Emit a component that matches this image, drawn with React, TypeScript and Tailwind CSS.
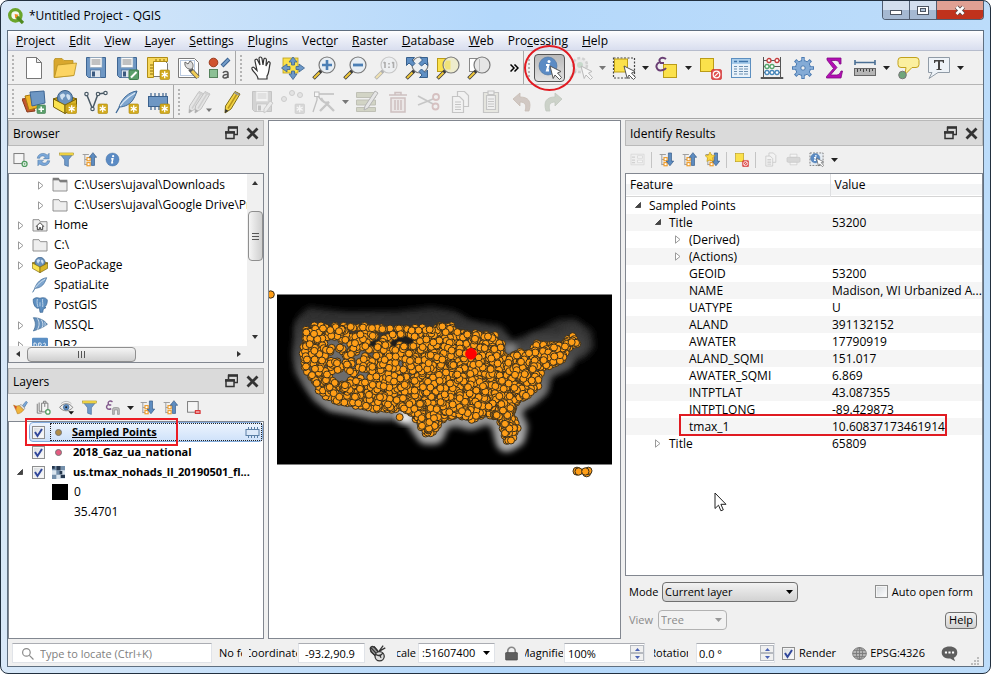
import React from "react";

type IconProps = { name: string; size?: number; className?: string };

/* ---------- small parts shared by the icons ---------- */

const StarBadge = () => (
  <g>
    <rect x="14" y="14" width="9.500" height="9.500" rx="1" fill="#d3ab1d" stroke="#a98408" strokeWidth=".6" />
    <path d="M18.700 15.200v7M15.700 17l6 3.400M21.700 17l-6 3.400" stroke="#fff" strokeWidth="1.300" />
  </g>
);

const Lens = ({ fill = "#e8eef4" }: { fill?: string }) => (
  <g>
    <path d="M1.500 22.500l8-8" stroke="#3b3b3b" strokeWidth="3.600" />
    <path d="M2 22l5.500-5.500" stroke="#f0c83a" strokeWidth="2" />
    <circle cx="15" cy="9" r="8" fill={fill} stroke="#7a7a7a" strokeWidth="1.200" />
  </g>
);

const Arrow = () => (
  <path d="M12 10l11 5.500-3.500 1.500 4 4.500-2 2-4.500-4.500-1.800 3.500z" fill="#fff" stroke="#555" strokeWidth="1" />
);

const Floppy = () => (
  <g>
    <path d="M2.500 1.500h19v20h-17l-2-2z" fill="#6e97c4" stroke="#3f6693" />
    <rect x="6" y="1.500" width="12" height="10" fill="#fafafa" stroke="#8aa0b5" strokeWidth=".6" />
    <path d="M7.500 4h9M7.500 6h9M7.500 8h9" stroke="#888" />
    <rect x="6.500" y="14" width="10" height="7.500" fill="#dfe6ee" stroke="#3f6693" strokeWidth=".6" />
    <rect x="8" y="15.500" width="3" height="5" fill="#3b5a80" />
  </g>
);

const Tree = ({ up }: { up?: boolean }) => (
  <g>
    <path d="M1 4h10M4.500 4v17M4.500 12h4M4.500 20h4" stroke="#9a9a9a" strokeWidth="1.500" fill="none" />
    <rect x="8" y="9" width="5" height="5" fill="#fff" stroke="#ef9a24" strokeWidth="1.800" />
    <rect x="8" y="17" width="5" height="5" fill="#fff" stroke="#ef9a24" strokeWidth="1.800" />
    {up ? (
      <path d="M17.500 1l6 7.500h-3.500v13h-5v-13H11.500z" fill="#5d8cc0" stroke="#2f5480" />
    ) : (
      <path d="M17.500 22l6-7.500h-3.500v-13h-5v13H11.500z" fill="#5d8cc0" stroke="#2f5480" />
    )}
  </g>
);

const Box = () => (
  <g>
    <path d="M0 9l12-4 12 4-12 6z" fill="#c49a12" stroke="#75600c" />
    <circle cx="12" cy="8" r="7.500" fill="#6a92bd" stroke="#3a5f87" />
    <path d="M7 5c2-2 4-2 5 0s-2 2-2 4-3 0-3-4zM14 4c3 0 4 3 3 5s-2 1-3-1-1-3 0-4z" fill="#cfe0f0" />
    <path d="M.5 9l11.500 6v8.500L.5 17z" fill="#fbe34e" stroke="#75600c" />
    <path d="M23.500 9L12 15v8.500L23.500 17z" fill="#d9b526" stroke="#75600c" />
  </g>
);

const Feather = () => (
  <g>
    <path d="M22 1C14 2 7 8 4 17c6 0 12-3 15-9 1-2 2-4 3-7z" fill="#7fa6cf" stroke="#3d6896" />
    <path d="M1 23C5 14 11 8 20 3" stroke="#dbe8f4" strokeWidth="1.200" fill="none" />
    <path d="M1 23l4-7" stroke="#3d6896" strokeWidth="1.300" />
  </g>
);

const Chip = () => (
  <g>
    <path d="M5 3v17M9 3v17M13 3v17M17 3v17M20 3v17" stroke="#3b618d" strokeWidth="1.200" />
    <rect x="2.500" y="6.500" width="19" height="10" fill="#6e97c4" stroke="#3b618d" />
  </g>
);

const Pencil = ({ dx = 0 }: { dx?: number }) => (
  <g transform={`translate(${dx} 0)`}>
    <path d="M16 1.500l5 2.500-9 15-6 4 .5-7z" fill="#f4d445" stroke="#7d6c1a" />
    <path d="M18.500 3L9 18.500" stroke="#b9961a" strokeWidth="1.500" />
    <path d="M15.500 2.500l4.500 2.500" stroke="#999" strokeWidth="2" />
    <path d="M6 23l.3-4 3 1.800z" fill="#333" />
  </g>
);

const Info = ({ r = 9, cx = 10, cy = 10 }: { r?: number; cx?: number; cy?: number }) => (
  <g>
    <circle cx={cx} cy={cy} r={r} fill="#5b8bc4" stroke="#47719f" strokeWidth=".6" />
    <circle cx={cx + 1} cy={cy - r * 0.5} r={r * 0.17} fill="#fff" />
    <path
      d={`M${cx - 2} ${cy - 1}h2.500l-1.500 ${r * 0.6}h2`}
      stroke="#fff"
      strokeWidth={r * 0.23}
      fill="none"
    />
  </g>
);

const NoEntry = () => (
  <g>
    <rect x="13.500" y="13.500" width="10" height="10" rx="1.500" fill="#e05050" stroke="#c22" strokeWidth=".6" />
    <circle cx="18.500" cy="18.500" r="3.300" fill="none" stroke="#fff" strokeWidth="1.200" />
    <path d="M16.300 20.700l4.400-4.400" stroke="#fff" strokeWidth="1.200" />
  </g>
);

const Plus = ({ color = "#5a9e6b" }: { color?: string }) => (
  <g>
    <rect x="15" y="15" width="8.500" height="8.500" rx="1" fill={color} stroke="#3d7d4c" strokeWidth=".6" />
    <path d="M19.200 16.500v5.500M16.500 19.200h5.500" stroke="#fff" strokeWidth="1.500" />
  </g>
);

const FolderShape = () => <path d="M1.500 4h9l2 3h10v14h-21z" fill="#eeeeee" stroke="#8a8a8a" strokeWidth="1.400" />;

const icons: Record<string, React.ReactNode> = {
  newFile: <path d="M4.500 1.500h10l5 5v16h-15zM14.500 1.500v5h5" fill="#fff" stroke="#777" />,
  open: (
    <g stroke="#b8901f" strokeWidth=".8">
      <path d="M1 4.500l1-2h7l2 2h9v15l-19 2z" fill="#d9a72d" />
      <path d="M4.500 9L23.500 7l-2.500 12.500-19.500 2z" fill="#fcd462" />
    </g>
  ),
  save: <Floppy />,
  saveAs: (
    <g>
      <Floppy />
      <rect x="14" y="14" width="9.500" height="9.500" rx="1" fill="#5a9e6b" stroke="#3d7d4c" />
      <path d="M16 21.500l5.500-5.500" stroke="#fff" strokeWidth="2" />
    </g>
  ),
  layout: (
    <g>
      <path d="M7.500 3.500h10l4 4v13h-14z" fill="#fff" stroke="#777" />
      <path d="M1.500 1.500h20v4h-14v16h-6z" fill="#f7d75a" stroke="#b08d16" />
      <path d="M4 9h3M4 12h3M4 15h3M4 18h3M10 3v2M14 3v2M18 3v2" stroke="#8a6c0b" />
      <StarBadge />
    </g>
  ),
  layoutManager: (
    <g>
      <path d="M1.500 2.500h16l4 4v15h-20z" fill="#fff" stroke="#7b7b7b" />
      <rect x="3.500" y="4.500" width="14" height="15" fill="none" stroke="#b9c9e0" />
      <path d="M13 13l8 8.500" stroke="#555" strokeWidth="4.500" />
      <path d="M15 15l6 6.500" stroke="#f0cc55" strokeWidth="3" />
      <path d="M8 6l3 2 2-3c3 1 4 5 2 8-4 1-8-2-7-7z" fill="#ddd" stroke="#666" />
    </g>
  ),
  style: (
    <g>
      <circle cx="5.500" cy="6.500" r="4.300" fill="#d0532f" stroke="#9b3a1c" />
      <path d="M14 10l7-7" stroke="#3a6292" strokeWidth="4" />
      <path d="M14.500 9.500l6-6" stroke="#759fcb" strokeWidth="2" />
      <rect x="1.500" y="13.500" width="8" height="8" fill="#8cc095" stroke="#55825c" />
      <path d="M15 17c1-2 5-2 5 .5V22M20 18.500c-6-.5-6 4-3 3.500 2 0 3-1.500 3-3" stroke="#555" strokeWidth="1.500" fill="none" />
    </g>
  ),
  hand: (
    <path
      d="M8 23c0-4-5-7-6-10-.5-2 1.500-2.500 3-.5l2 2L5 5c-.3-2 2-2.500 2.800-.5L10 9 9 2.500C9 .5 11.500.5 12 2.500L13 9l.8-5.500c.4-2 2.700-1.500 2.600.5L16 10l1.800-3.500c1-1.500 2.800-.5 2.200 1.500-1 4-1 10-3 12v3z"
      fill="#fff"
      stroke="#333"
      strokeWidth="1.200"
    />
  ),
  panTo: (
    <g stroke="#3c658f" strokeWidth=".8">
      <rect x="2" y="2" width="15" height="15" fill="#fbe14b" stroke="#bb9c17" />
      <path d="M12 1l4 5h-2.500v3H10.500V6H8zM23.500 12L18 16v-2.500h-3v-3h3V8zM12 23.500L8 18h2.500v-3h3v3H16zM.5 12L6 8v2.500h3v3H6V16z" fill="#6c98c8" />
    </g>
  ),
  zoomIn: (
    <g>
      <Lens />
      <path d="M15 4v10M10 9h10" stroke="#4c7fb5" strokeWidth="2.600" />
    </g>
  ),
  zoomOut: (
    <g>
      <Lens />
      <path d="M10 9h10" stroke="#4c7fb5" strokeWidth="2.800" />
    </g>
  ),
  zoomNative: (
    <g opacity=".35">
      <Lens />
      <path d="M11 6v6M9.500 7l1.500-.7M19.500 6v6M18 7l1.500-.7M15 7v1.500M15 10.500V12" stroke="#333" strokeWidth="1.600" />
    </g>
  ),
  zoomFull: (
    <g>
      <Lens fill="#eceff2" />
      <path d="M1.500 1.500h8L7 4l3 3.500-2.500 2.500L4 7 1.500 9.500zM22.500 1.500v8L20 7l-3.500 3L14 7.500 17.500 4 15 1.500zM22.500 21.500h-8L17 19l-3-3.500 2.500-2.500 3.500 3.500 2.500-2.500z" fill="#5f8fc4" stroke="#38608c" />
    </g>
  ),
  zoomSelection: (
    <g>
      <rect x="1.500" y="2.500" width="11" height="13" fill="#fbe14b" stroke="#bb9c17" />
      <Lens fill="#eeeccd" />
      <path d="M10 4.500h4.500v9H10l-2-4.500z" fill="#f0e27a" />
    </g>
  ),
  zoomLayer: (
    <g>
      <rect x="2.500" y="2.500" width="10" height="13" fill="#fff" stroke="#888" />
      <Lens fill="#e6e6e6" />
      <path d="M12.500 3v12" stroke="#bbb" />
    </g>
  ),
  identify: (
    <g>
      <Info />
      <Arrow />
    </g>
  ),
  action: (
    <g opacity=".35">
      <circle cx="11" cy="9" r="7" fill="#ddd" stroke="#999" strokeWidth="2.500" strokeDasharray="3 2" />
      <circle cx="11" cy="9" r="3" fill="#7db08a" />
      <Arrow />
      <path d="M1 22l6-7" stroke="#777" strokeWidth="2" />
    </g>
  ),
  select: (
    <g>
      <rect x="1.500" y="2" width="21" height="20" fill="none" stroke="#444" strokeWidth="1.200" strokeDasharray="2 1.500" />
      <rect x="2.500" y="3" width="13" height="13" fill="#fbe14b" stroke="#bb9c17" />
      <Arrow />
    </g>
  ),
  expression: (
    <g>
      <rect x="8.500" y="8.500" width="13" height="13" fill="#fbe14b" stroke="#bb9c17" />
      <path d="M11 3C7 0 3 3 5 6c-6 2-4 10 3 8 2-.5 3-2 3-2M5 7h4" stroke="#6a3f74" strokeWidth="2" fill="none" />
    </g>
  ),
  deselect: (
    <g>
      <rect x="2.500" y="2.500" width="13" height="13" fill="#fbe14b" stroke="#bb9c17" />
      <NoEntry />
    </g>
  ),
  table: (
    <g>
      <rect x="2.500" y="2.500" width="19" height="19" fill="#e9f2fa" stroke="#5c8fc0" />
      <rect x="3" y="3" width="18" height="5" fill="#a9cdeb" />
      <path d="M5 5.500h3M10 5.500h9" stroke="#3f75aa" strokeWidth="1.500" />
      <path d="M5 10.500h3M5 13h3M5 15.500h3M5 18h3M10 10.500h4M15 10.500h4M10 13h4M15 13h4M10 15.500h4M15 15.500h4M10 18h4M15 18h4" stroke="#6b8fb0" />
    </g>
  ),
  abacus: (
    <g fill="#fff">
      <path d="M3.500 1v20M20.500 1v20M3 4.500h18M3 10.500h18M3 16.500h18M1 21.500h22v1H1z" stroke="#555" />
      <g stroke="#c43c3c" strokeWidth="1.300"><circle cx="9" cy="4.500" r="2" /><circle cx="17" cy="4.500" r="2" /></g>
      <g stroke="#56a56c" strokeWidth="1.300"><circle cx="7" cy="10.500" r="2" /><circle cx="12" cy="10.500" r="2" /></g>
      <g stroke="#4586bb" strokeWidth="1.300"><circle cx="7" cy="16.500" r="2" /><circle cx="12" cy="16.500" r="2" /><circle cx="17" cy="16.500" r="2" /></g>
    </g>
  ),
  gear: (
    <g>
      <path d="M12 1v22M1 12h22M4.200 4.200l15.600 15.600M19.800 4.200L4.200 19.800" stroke="#4b7bb2" strokeWidth="3.400" />
      <circle cx="12" cy="12" r="7.500" fill="#84abd6" stroke="#4b7bb2" />
      <path d="M12 2v20M2 12h20M5 5l14 14M19 5L5 19" stroke="#84abd6" strokeWidth="2" />
      <circle cx="12" cy="12" r="2.200" fill="#f0f0f0" stroke="#4b7bb2" />
    </g>
  ),
  sigma: <path d="M5 2h14v6h-1.500c-.5-2.500-1.500-3.500-4-3.500H9l6 7-6.500 7.500h6c2.500 0 3.500-1.500 4.500-4h1.500L19 22H4.500v-1.500l7-8L5 4z" fill="#b40db4" stroke="#7d0c80" strokeWidth=".8" />,
  ruler: (
    <g>
      <path d="M2 6.500h20M2 4v5M22 4v5" stroke="#4a6f94" strokeWidth="1.600" />
      <rect x="1.500" y="12.500" width="21" height="7" fill="#b5b5b5" stroke="#666" />
      <path d="M4.500 13v3M7.500 13v2M10.500 13v3M13.500 13v2M16.500 13v3M19.500 13v2" stroke="#444" />
    </g>
  ),
  tip: (
    <g>
      <path d="M5 1.500h15q3 0 3 3v4q0 3-3 3h-4l-7 7 1-7H5q-3 0-3-3v-4q0-3 3-3z" fill="#fbef9f" stroke="#c2a21c" />
      <circle cx="6.500" cy="19" r="3.800" fill="#6fa57b" stroke="#777" />
    </g>
  ),
  text: (
    <g>
      <path d="M1.500 1.500h21v15H11l-9 6 3-6H1.500z" fill="#eef3f8" stroke="#909ba6" />
      <path d="M7 4h10v3h-1l-.5-1.500H13V13h1.500v1h-5v-1H11V5.500H8.500L8 7H7z" fill="#444" />
    </g>
  ),
  dataSource: (
    <g>
      <path d="M0 9l7-1 6 13-8 1z" fill="#c4572e" stroke="#873919" />
      <path d="M3 6l10-2 5 13-11 3z" fill="#f0b429" stroke="#a5780f" />
      <path d="M8 2l14-1 1 12-13 3z" fill="#6e97c4" stroke="#3f6693" />
      <Plus />
    </g>
  ),
  geopackage: (
    <g>
      <Box />
      <StarBadge />
    </g>
  ),
  shapefile: (
    <g>
      <path d="M2.500 4l6 15 5.500-15 7-1" stroke="#4a5a66" strokeWidth="1.500" fill="none" />
      <g fill="#fff" stroke="#4a5a66" strokeWidth="1.200"><circle cx="2.500" cy="4" r="1.700" /><circle cx="14" cy="4" r="1.700" /><circle cx="21.500" cy="3" r="1.700" /><circle cx="8.500" cy="19" r="1.700" /></g>
      <StarBadge />
    </g>
  ),
  spatialite: (
    <g>
      <Feather />
      <StarBadge />
    </g>
  ),
  memory: (
    <g>
      <Chip />
      <StarBadge />
    </g>
  ),
  pencils: (
    <g>
      <g className="opacity-35 grayscale">
        <Pencil dx={-5} />
        <Pencil dx={1} />
      </g>
      <path d="M18 18.500h6l-3 3.500z" fill="#777" />
    </g>
  ),
  pencil: <Pencil />,
  saveEdits: (
    <g className="opacity-30 grayscale">
      <Floppy />
      <path d="M20 11l3 2-6 8-3 2v-4z" fill="#ddd" stroke="#777" />
    </g>
  ),
  addPoint: (
    <g className="opacity-35 grayscale">
      <g fill="#ccc" stroke="#888"><circle cx="3" cy="9" r="2.500" /><circle cx="11" cy="3" r="2.500" /><circle cx="19" cy="5" r="2.500" /></g>
      <StarBadge />
    </g>
  ),
  vertex: (
    <g className="opacity-40">
      <path d="M5 4h17M5 5v5l-4 12M6 6l4 5" stroke="#777" strokeWidth="1.300" fill="none" />
      <rect x="2.500" y="2" width="4.500" height="4.500" fill="#fff" stroke="#777" />
      <path d="M9 8c2 4 4 6 8 4l-9 9M14 13l8 8" stroke="#888" strokeWidth="2.400" fill="none" />
    </g>
  ),
  multiEdit: (
    <g className="opacity-50">
      <path d="M1.500 2.500h19v5h-19zM1.500 10h19v5h-19zM1.500 17.500h19v4h-19z" fill="#b6ba9c" stroke="#8f927d" />
      <path d="M20 1l3 2-10 15-4 2 1-4z" fill="#ddd" stroke="#777" />
    </g>
  ),
  trash: (
    <g className="opacity-40" stroke="#9a7a7a" fill="none" strokeWidth="1.500">
      <path d="M3 5h18M9 5V2.500h6V5M5 8v14h14V8z" fill="#e5dada" />
      <path d="M9 10v10M12 10v10M15 10v10" />
    </g>
  ),
  cut: (
    <g className="opacity-40" fill="none" strokeWidth="1.800">
      <path d="M1 6l15 8M1 15l15-6" stroke="#8a8a8a" />
      <circle cx="19" cy="7" r="3" stroke="#b07d7d" />
      <circle cx="18.500" cy="16.500" r="3" stroke="#b07d7d" />
    </g>
  ),
  copy: (
    <g className="opacity-35" fill="#f6f6f6" stroke="#777" strokeWidth="1.200">
      <path d="M9.500 1.500h7l4 4v11h-11z" />
      <path d="M4.500 6.500h7l4 4v12h-11z" />
      <path d="M7 12h6M7 14.500h6M7 17h6M7 19.500h6" />
    </g>
  ),
  paste: (
    <g className="opacity-35" fill="#eee" stroke="#777" strokeWidth="1.200">
      <path d="M4.500 2.500h15v20h-15z" fill="#d8d8c6" />
      <path d="M7.500 5.500h9v14h-9zM9 1h6v3.500H9z" />
      <path d="M9 9h6M9 11.500h6M9 14h6M9 16.500h6" />
    </g>
  ),
  undo: <path d="M3 9l7-6v4c8 0 12 4 9 14h-4c2-6 0-9-5-9v4z" fill="#b3a298" stroke="#a08979" strokeWidth=".8" opacity=".5" />,
  redo: <path d="M21 9l-7-6v4c-8 0-12 4-9 14h4c-2-6 0-9 5-9v4z" fill="#a9b5a4" stroke="#92a08d" strokeWidth=".8" opacity=".5" />,

  addLayer: (
    <g>
      <rect x="1.500" y="2.500" width="16" height="16" fill="#f5f5f5" stroke="#777" strokeWidth="1.500" />
      <circle cx="18.500" cy="19" r="4" fill="#fff" stroke="#4d9a5d" strokeWidth="2" />
      <path d="M18.500 17v4M16.500 19h4" stroke="#4d9a5d" />
    </g>
  ),
  refresh: (
    <g fill="#7aa7d9" stroke="#44719f" strokeWidth=".8">
      <path d="M2 10C3 2 13 0 18 5l3-3v9h-9l3-3c-4-3-8-2-9 2z" />
      <path d="M22 14c-1 8-11 10-16 5l-3 3v-9h9l-3 3c4 3 8 2 9-2z" />
    </g>
  ),
  filter: (
    <g>
      <path d="M1 2.500h22l-8 10V23l-6-2v-8.500z" fill="#6e9ac9" stroke="#41699a" />
      <rect x="1" y="1.500" width="22" height="3.500" fill="#f5da48" stroke="#b39620" strokeWidth=".8" />
    </g>
  ),
  collapse: <Tree up />,
  expand: <Tree />,
  info: <Info r={10.500} cx={12} cy={12} />,
  brush: (
    <g>
      <path d="M15 9l6-7 2 2-5 8z" fill="#7aa7d9" stroke="#44719f" />
      <path d="M10 9l3-2 6 6-2 3z" fill="#e0e0e0" stroke="#888" />
      <path d="M1 8c4 3 6 1 9 1l7 7c-3 4-7 6-10 6-1-4-4-9-6-14z" fill="#f0b43c" stroke="#b9801d" />
      <path d="M1 8c2 2 4 2 5 2l-1 6z" fill="#cf4e31" />
    </g>
  ),
  group: (
    <g fill="none" stroke="#777" strokeWidth="1.500">
      <path d="M2 6v15h7M5 4v14h5" />
      <path d="M9 5h10v14H9zM12 5V2h4v3M14 5v6" fill="#f4f4f4" />
      <circle cx="19" cy="19" r="3.500" fill="#fff" stroke="#4d9a5d" strokeWidth="2" />
    </g>
  ),
  eye: (
    <g>
      <path d="M1 12C6 4 17 4 22 12c-6 7-15 7-21 0z" fill="#eee" stroke="#777" strokeWidth="1.400" />
      <circle cx="11.500" cy="11.500" r="4.500" fill="#5d8cc0" stroke="#3f6693" />
      <circle cx="11.500" cy="11.500" r="1.600" fill="#222" />
      <path d="M3 6C8 1 15 1 20 6" stroke="#999" fill="none" />
      <path d="M15 18h9l-4.500 5z" fill="#111" />
    </g>
  ),
  epsilonFilter: (
    <g>
      <path d="M12 3C8 0 3 3 6 7c-6 2-4 10 4 7M6 8h4" stroke="#80578b" strokeWidth="2.200" fill="none" />
      <path d="M12 23v-8q0-3 3-3h5q3 0 3 3v8h-3v-7h-5v7z" fill="#bbb" stroke="#888" />
    </g>
  ),
  removeLayer: (
    <g>
      <rect x="2.500" y="2.500" width="17" height="17" fill="#f5f5f5" stroke="#777" strokeWidth="1.500" />
      <rect x="14" y="16" width="9.500" height="6.500" rx="1" fill="#d9383a" />
      <path d="M16 19.200h5.500" stroke="#fff" strokeWidth="1.500" />
    </g>
  ),
  form: (
    <g className="opacity-35" fill="#eee" stroke="#999">
      <path d="M1.500 3.500h21v17h-21z" />
      <path d="M3 8h5M3 13h5M3 17h5" strokeWidth="2" />
      <path d="M12 6h8v4h-8zM12 13h8v4h-8z" fill="#fff" />
    </g>
  ),
  expandNew: (
    <g>
      <Tree />
      <path d="M8 0l2.500 5 5.500.5-4 4 1 5.500-5-2.500L3 15l1-5.500-4-4L5.500 5z" fill="#fcd83f" stroke="#c19a17" />
    </g>
  ),
  print: (
    <g className="opacity-35" stroke="#777">
      <path d="M6.500 3.500h11v5h-11zM6.500 15.500h11v5h-11z" fill="#fff" />
      <rect x="1.500" y="8.500" width="21" height="8" rx="2" fill="#aaa" />
    </g>
  ),
  identifyBox: (
    <g>
      <rect x="1.500" y="1.500" width="21" height="20" fill="#e8eef4" stroke="#777" strokeWidth="1.400" strokeDasharray="3 2" />
      <Info r={7.500} />
      <Arrow />
    </g>
  ),

  folder: <FolderShape />,
  folderLink: (
    <g>
      <FolderShape />
      <path d="M1 1h9l2 3h11v4H12L10 5H1z" fill="#7d7d7d" />
    </g>
  ),
  home: (
    <g>
      <FolderShape />
      <path d="M6.500 14l5.500-5.500 5.500 5.500h-1.500v5h-3v-3h-2v3H8v-5z" fill="#fff" stroke="#333" strokeWidth="1.400" />
    </g>
  ),
  box: <Box />,
  feather: <Feather />,
  postgis: (
    <g>
      <path d="M2 3C6 0 9 1 12 2c4-2 10-1 11 3 0 5-2 9-4 10l2 1-4 2-1 5h-4l-1-7-2 1c-5 0-8-9-7-14z" fill="#5e8fc0" stroke="#315e8c" />
      <path d="M8 3c-1 5 0 9 1 12M16 3c-1 4 1 6 0 12M12 8v6" stroke="#d3e2f0" strokeWidth="1.200" fill="none" />
    </g>
  ),
  mssql: (
    <g>
      <path d="M2 1c9 0 17 4 21 10-5 4-12 7-21 10 4-7 4-13 0-20z" fill="#6691bd" stroke="#3c668f" />
      <path d="M8 2c4 6 3 12 0 17M14 4c3 5 3 8 1 12M19 8c1 2 1 4 0 6" stroke="#cfdeed" strokeWidth="1.500" fill="none" />
    </g>
  ),
  db2: (
    <g>
      <rect x="0" y="1" width="24" height="22" rx="2" fill="#5b8fc4" />
      <path d="M3 9v8h1.500c3.500 0 3.500-8 0-8zM10 9v8h2.500c3 0 2-4 0-4 2 0 2-4 0-4zM17 10c2-2 4 0 3 2l-3 5h4" stroke="#fff" strokeWidth="1.300" fill="none" />
    </g>
  ),
  raster: (
    <g>
      <rect width="24" height="24" fill="#dce6ef" />
      <path d="M0 0h8v8H0zM16 0h8v8h-8zM8 8h8v8H8zM0 16h8v8H0z" fill="#7590ab" />
      <path d="M8 0h8v8H8zM0 0h5v5H0zM14 9h5v6h-5zM16 16h8v6h-8z" fill="#26384f" />
    </g>
  ),
  qgis: (
    <g>
      <circle cx="11" cy="11" r="8.500" fill="#f3f8ee" stroke="#6aa52a" strokeWidth="5" />
      <path d="M13 13l9.500 9.500" stroke="#4f8a1f" strokeWidth="5" />
      <path d="M10 9l6 1-5 6z" fill="#f08c20" />
    </g>
  ),
  search: <path d="M10 3a7 7 0 1 1 0 14 7 7 0 0 1 0-14zM15 15l8 8" stroke="#8a8a8a" strokeWidth="2.200" fill="none" />,
  mouse: (
    <g stroke="#333" fill="none" strokeWidth="1.800">
      <ellipse cx="8" cy="9" rx="4" ry="8" fill="#999" transform="rotate(-40 8 9)" />
      <path d="M3 4l9 10M2 9l7 6M7 2l6 8M20 1l-6 8 9-5" />
      <ellipse cx="15" cy="16" rx="6.500" ry="6.500" fill="#ddd" />
      <path d="M9 13c4 3 8 2 11-2M15 14l2 4" />
    </g>
  ),
  lock: (
    <g>
      <path d="M6 11V8a6 6 0 0 1 12 0v3" stroke="#888" strokeWidth="2.600" fill="none" />
      <rect x="2.500" y="10.500" width="19" height="12" rx="1" fill="#5e5e5e" stroke="#444" />
    </g>
  ),
  globe: (
    <g fill="none" stroke="#777" strokeWidth="1.400">
      <ellipse cx="12" cy="12" rx="11" ry="9.500" fill="#b5b5b5" />
      <ellipse cx="12" cy="12" rx="5" ry="9.500" />
      <path d="M1 12h22M3 7h18M3 17h18M12 2v20" />
    </g>
  ),
  message: (
    <g>
      <path d="M12 2c7 0 11 3.500 11 8.500 0 4-2 6-5 7.500l2 5-7-4C5 19 1 16 1 10.500S5 2 12 2z" fill="#5e5e5e" />
      <path d="M5.500 9h3v3h-3zM10.500 9h3v3h-3zM15.500 9h3v3h-3z" fill="#fff" />
    </g>
  ),
};

const Icon = ({ name, size = 24, className = "" }: IconProps) => (
  <svg width={size} height={size} viewBox="0 0 24 24" className={`shrink-0 ${className}`} aria-hidden="true">
    {icons[name]}
  </svg>
);

const Caret = ({ className = "text-[#222]" }: { className?: string }) => (
  <svg width="7" height="4" viewBox="0 0 7 4" className={`shrink-0 ${className}`} aria-hidden="true">
    <path d="M0 0h7L3.500 4z" fill="currentColor" />
  </svg>
);

/* ---------- toolbars ---------- */

const Grip = ({ line = true }: { line?: boolean }) => (
  <div className={`flex h-full shrink-0 items-center pl-1 ${line ? "w-[11px] border-l border-[#a8a8a8]" : "w-[10px]"}`}>
    <div className="h-[26px] w-0 border-l-2 border-dotted border-[#b4b4b4]" />
  </div>
);

const Tool = ({ name }: { name: string }) => (
  <button aria-label={name} className="flex h-[31px] w-[31px] shrink-0 items-center justify-center">
    <Icon name={name} />
  </button>
);

const MenuCaret = ({ muted }: { muted?: boolean }) => (
  <button aria-label="more" className="flex h-[31px] w-3 shrink-0 items-center justify-center">
    <Caret className={muted ? "text-[#777]" : "text-[#222]"} />
  </button>
);

const MiniTool = ({ name }: { name: string }) => (
  <button aria-label={name} className="flex h-6 w-[23px] shrink-0 items-center justify-center">
    <Icon name={name} size={15} />
  </button>
);

const menus = [
  ["", "P", "roject"],
  ["", "E", "dit"],
  ["", "V", "iew"],
  ["", "L", "ayer"],
  ["", "S", "ettings"],
  ["", "P", "lugins"],
  ["Vect", "o", "r"],
  ["", "R", "aster"],
  ["", "D", "atabase"],
  ["", "W", "eb"],
  ["Pro", "c", "essing"],
  ["", "H", "elp"],
];

const MainToolbars = () => (
  <>
    <div className="flex h-[34px] shrink-0 items-center border-b border-[#b5b5b5]">
      <Grip line={false} />
      {["newFile", "open", "save", "saveAs", "layout", "layoutManager", "style"].map((n) => (
        <Tool key={n} name={n} />
      ))}
      <Grip />
      {["hand", "panTo", "zoomIn", "zoomOut", "zoomNative", "zoomFull", "zoomSelection", "zoomLayer"].map((n) => (
        <Tool key={n} name={n} />
      ))}
      <button aria-label="more tools" className="flex w-[29px] justify-end pr-1">
        <svg width="9" height="8" viewBox="0 0 9 8" aria-hidden="true">
          <path d="M.5.500L4 4 .5 7.500M4.500.500L8 4 4.500 7.500" fill="none" stroke="#000" strokeWidth="1.500" />
        </svg>
      </button>
      <Grip />
      <div className="relative flex">
        <button
          aria-label="identify"
          className="flex h-7 w-[31px] items-center justify-center rounded-sm border border-[#555] bg-gradient-to-b from-[#b9b9b9] to-[#e2e2e2]"
        >
          <Icon name="identify" />
        </button>
        <div className="pointer-events-none absolute -inset-x-[10px] -inset-y-[9px] z-10 rounded-[50%] border-2 border-[#e11b22]" />
      </div>
      <Tool name="action" />
      <MenuCaret muted />
      <Tool name="select" />
      <MenuCaret />
      <Tool name="expression" />
      <MenuCaret />
      {["deselect", "table", "abacus", "gear", "sigma", "ruler"].map((n) => (
        <Tool key={n} name={n} />
      ))}
      <MenuCaret />
      <Tool name="tip" />
      <Tool name="text" />
      <MenuCaret />
    </div>
    <div className="flex h-[34px] shrink-0 items-center border-b border-[#a5a5a5]">
      <Grip line={false} />
      {["dataSource", "geopackage", "shapefile", "spatialite", "memory"].map((n) => (
        <Tool key={n} name={n} />
      ))}
      <Grip />
      {["pencils", "pencil", "saveEdits", "addPoint", "vertex"].map((n) => (
        <Tool key={n} name={n} />
      ))}
      <MenuCaret muted />
      {["multiEdit", "trash", "cut", "copy", "paste", "undo", "redo"].map((n) => (
        <Tool key={n} name={n} />
      ))}
    </div>
  </>
);

/* ---------- docks ---------- */

const DockTitle = ({ title }: { title: string }) => (
  <div className="flex h-[26px] shrink-0 items-center border border-[#b9b9b9] bg-[#dadada] pl-1 pr-1">
    <h2 className="grow pt-px">{title}</h2>
    <button aria-label={`Float ${title}`} className="mr-2">
      <svg width="13" height="14" viewBox="0 0 13 14" aria-hidden="true">
        <path d="M3.500 5V1.500h9v7H9" fill="none" stroke="#333" strokeWidth="1.500" />
        <path d="M3 1.500h10" stroke="#333" strokeWidth="2.500" />
        <rect x="1" y="6" width="8" height="6.500" fill="#dadada" stroke="#333" strokeWidth="1.500" />
        <path d="M0 6.500h10" stroke="#333" strokeWidth="2.500" />
      </svg>
    </button>
    <button aria-label={`Close ${title}`}>
      <svg width="13" height="13" viewBox="0 0 13 13" aria-hidden="true">
        <path d="M1.500 1.500l10 10M11.500 1.500l-10 10" stroke="#333" strokeWidth="2.800" />
      </svg>
    </button>
  </div>
);

const Twisty = ({ state }: { state?: "open" | "closed" }) => (
  <span className="flex w-5 shrink-0 items-center justify-center">
    {state === "closed" && (
      <svg width="6" height="9" viewBox="0 0 6 9" aria-hidden="true">
        <path d="M.5.800v7.400L5 4.500z" fill="#fff" stroke="#9a9a9a" />
      </svg>
    )}
    {state === "open" && (
      <svg width="6" height="6" viewBox="0 0 7 7" aria-hidden="true">
        <path d="M6.500.500v6h-6z" fill="#444" stroke="#222" strokeWidth=".8" />
      </svg>
    )}
  </span>
);

const browserRows = [
  { label: "C:\\Users\\ujaval\\Downloads", icon: "folderLink", child: true, twisty: true },
  { label: "C:\\Users\\ujaval\\Google Drive\\Pro", icon: "folder", child: true, twisty: true },
  { label: "Home", icon: "home", twisty: true },
  { label: "C:\\", icon: "folder", twisty: true },
  { label: "GeoPackage", icon: "box", twisty: true },
  { label: "SpatiaLite", icon: "feather" },
  { label: "PostGIS", icon: "postgis" },
  { label: "MSSQL", icon: "mssql", twisty: true },
  { label: "DB2", icon: "db2", twisty: true },
];

const ScrollArrow = ({ d }: { d: string }) => (
  <svg width="8" height="8" viewBox="0 0 8 8" className="shrink-0" aria-hidden="true">
    <path d={d} fill="#333" />
  </svg>
);

const Browser = () => (
  <section className="flex shrink-0 flex-col">
    <DockTitle title="Browser" />
    <div className="flex h-[27px] items-center pl-px">
      {["addLayer", "refresh", "filter", "collapse", "info"].map((n) => (
        <MiniTool key={n} name={n} />
      ))}
    </div>
    <div className="flex h-[190px] flex-col border border-[#828790] bg-white">
      <div className="flex min-h-0 grow">
        <ul className="min-w-0 grow overflow-hidden pt-px">
          {browserRows.map((row) => (
            <li key={row.label} className={`flex h-5 items-center whitespace-nowrap ${row.child ? "pl-[22px]" : "pl-[2px]"}`}>
              <Twisty state={row.twisty ? "closed" : undefined} />
              <Icon name={row.icon} size={16} className="ml-px mr-[6px]" />
              {row.label}
            </li>
          ))}
        </ul>
        <div className="flex w-4 shrink-0 flex-col items-center bg-[#f0f0f0] py-[5px]">
          <ScrollArrow d="M4 2l3 4H1z" />
          <div className="mt-6 flex h-[50px] w-[15px] flex-col items-center justify-center gap-[2px] rounded-sm border border-[#8f8f8f] bg-gradient-to-r from-[#f5f5f5] to-[#cfcfcf]">
            <i className="h-px w-[7px] bg-[#555]" />
            <i className="h-px w-[7px] bg-[#555]" />
            <i className="h-px w-[7px] bg-[#555]" />
          </div>
          <div className="grow" />
          <ScrollArrow d="M4 6L1 2h6z" />
        </div>
      </div>
      <div className="flex h-4 shrink-0 items-center bg-[#f0f0f0] pl-[5px] pr-5">
        <ScrollArrow d="M2 4l4-3v6z" />
        <div className="ml-[5px] flex h-[15px] w-[109px] items-center justify-center gap-[2px] rounded-sm border border-[#8f8f8f] bg-gradient-to-b from-[#f5f5f5] to-[#cfcfcf]">
          <i className="h-[7px] w-px bg-[#555]" />
          <i className="h-[7px] w-px bg-[#555]" />
          <i className="h-[7px] w-px bg-[#555]" />
        </div>
        <div className="grow" />
        <ScrollArrow d="M6 4L2 1v6z" />
      </div>
    </div>
  </section>
);

const CheckBox = ({ label, checked = true }: { label: string; checked?: boolean }) => (
  <span className="relative flex shrink-0">
    <input
      type="checkbox"
      aria-label={label}
      defaultChecked={checked}
      className="peer h-[13px] w-[13px] appearance-none border border-[#8e8f8f] bg-gradient-to-br from-[#d5d9dd] to-white outline outline-1 -outline-offset-2 outline-[#f4f4f4]"
    />
    <svg viewBox="0 0 13 13" className="pointer-events-none absolute inset-0 hidden peer-checked:block" aria-hidden="true">
      <path d="M3 6l2.500 4L10 3" fill="none" stroke="#31479b" strokeWidth="2" />
    </svg>
  </span>
);

const Layers = () => (
  <section className="mt-[5px] flex min-h-0 grow flex-col">
    <DockTitle title="Layers" />
    <div className="flex h-[27px] items-center pl-[1px]">
      {["brush", "group", "eye", "filter", "epsilonFilter"].map((n) => (
        <MiniTool key={n} name={n} />
      ))}
      <MenuCaret />
      {["expand", "collapse", "removeLayer"].map((n) => (
        <MiniTool key={n} name={n} />
      ))}
    </div>
    <ul className="min-h-0 grow border border-[#828790] bg-white">
      <li className="relative ml-5 flex h-5 items-center rounded-sm border border-[#84acdd] bg-gradient-to-b from-[#edf4fd] to-[#cfe2fa] pl-[2px] text-[11px] font-bold">
        <CheckBox label="Sampled Points" />
        <div className="ml-[5px] flex h-full grow items-center border border-dotted border-[#222] pl-1">
          <i className="mr-[10px] h-[7px] w-[7px] rounded-full border border-[#777] bg-[#b18c45]" />
          <span className="grow underline">Sampled Points</span>
          <svg width="15" height="11" viewBox="0 0 15 11" className="mr-px" aria-hidden="true">
            <path d="M3.500 0v11M6.500 0v11M9.500 0v11M12.500 0v11" stroke="#5b7fa5" />
            <rect x="1" y="2.500" width="13" height="6" fill="#dce9f9" stroke="#5b7fa5" />
          </svg>
        </div>
        <div className="pointer-events-none absolute -left-[5px] -top-[5px] h-7 w-[153px] border-2 border-[#ec1c24]" />
      </li>
      <li className="flex h-5 items-center pl-[23px] text-[11px] font-bold">
        <CheckBox label="2018_Gaz_ua_national" />
        <i className="ml-[10px] mr-[11px] h-[7px] w-[7px] rounded-full border border-[#777] bg-[#e55b81]" />
        2018_Gaz_ua_national
      </li>
      <li className="flex h-5 items-center whitespace-nowrap pl-px text-[11px] font-bold">
        <Twisty state="open" />
        <span className="w-[2px] shrink-0" />
        <CheckBox label="us.tmax" />
        <Icon name="raster" size={13} className="ml-[7px] mr-2" />
        us.tmax_nohads_ll_20190501_fl...
      </li>
      <li className="flex h-5 items-center pl-[43px]">
        <i className="mr-[6px] h-4 w-4 bg-black" />0
      </li>
      <li className="flex h-5 items-center pl-[65px]">35.4701</li>
    </ul>
  </section>
);

/* ---------- map canvas ---------- */

const usa: [number, number][] = [
  [120, 147], [145, 133], [190, 141], [235, 138], [300, 139], [332, 141], [372, 144], [417, 144], [447, 141],
  [500, 148], [528, 135], [562, 138], [590, 158], [632, 158], [690, 167], [708, 192], [722, 235], [768, 214],
  [800, 218], [815, 191], [855, 190], [895, 197], [921, 165], [935, 188], [903, 206], [893, 240], [862, 251],
  [830, 262], [822, 288], [817, 319], [790, 343], [760, 358], [743, 380], [738, 405], [755, 440], [748, 468],
  [725, 481], [714, 440], [706, 412], [685, 405], [660, 398], [617, 415], [580, 404], [545, 408], [520, 425],
  [507, 458], [485, 458], [465, 430], [447, 403], [415, 380], [382, 385], [325, 384], [260, 370], [205, 360],
  [172, 338], [145, 300], [122, 262], [116, 215], [121, 175],
];

// areas nearly without towns: centre and radii
const gaps = [
  [207, 184, 20, 12], [212, 226, 30, 14], [230, 290, 30, 20], [322, 190, 16, 16], [418, 178, 34, 16],
  [440, 208, 18, 10], [250, 200, 14, 10], [180, 255, 10, 10], [272, 250, 10, 20], [350, 160, 12, 12],
  [478, 165, 8, 12], [380, 345, 8, 8],
];

const inside = (x: number, y: number) => {
  let hit = false;
  for (let i = 0, j = usa.length - 1; i < usa.length; j = i++) {
    const [xi, yi] = usa[i];
    const [xj, yj] = usa[j];
    if (yi > y !== yj > y && x < ((xj - xi) * (y - yi)) / (yj - yi) + xi) hit = !hit;
  }
  return hit;
};

const buildPoints = () => {
  let seed = 4326;
  const rand = () => {
    seed = (seed * 1664525 + 1013904223) % 4294967296;
    return seed / 4294967296;
  };
  const pts: [number, number][] = [];
  // coast and border towns
  usa.forEach(([x, y], i) => {
    const [nx, ny] = usa[(i + 1) % usa.length];
    const north = x < 700 && y < 200;
    const steps = Math.max(1, Math.round(Math.hypot(nx - x, ny - y) / (north ? 26 : 13)));
    for (let s = 0; s < steps; s++) {
      pts.push([x + ((nx - x) * s) / steps + rand() * 8 - 4, y + ((ny - y) * s) / steps + rand() * 8 - 4]);
    }
  });
  for (let n = 0; n < 4200; n++) {
    const x = 112 + rand() * 828;
    const y = 130 + rand() * 355;
    if (!inside(x, y)) continue;
    if (gaps.some(([cx, cy, rx, ry]) => ((x - cx) / rx) ** 2 + ((y - cy) / ry) ** 2 < 1)) continue;
    if (x < 440 && rand() > 0.62) continue;
    pts.push([x, y]);
  }
  return pts.concat([
    [404, 410], [195, 210], [216, 248], [246, 252], [255, 272], [225, 201], [417, 198], [432, 219],
    [240, 314], [273, 302], [222, 152], [270, 188], [258, 221], [417, 384], [155, 308], [147, 160],
    [730, 480], [738, 480], [720, 430], [507, 413], [470, 413], [900, 198], [868, 228], [800, 300],
  ]);
};

const points = buildPoints();

const MapCanvas = () => (
  <main className="min-w-0 grow border border-[#828790] bg-white">
    <svg viewBox="269 121 351 516" className="h-full w-full" role="img" aria-label="Map">
      <defs>
        <linearGradient id="warm" gradientUnits="userSpaceOnUse" x1="0" y1="90" x2="0" y2="500">
          <stop offset="0" stopColor="#2b2b2b" />
          <stop offset=".3" stopColor="#484848" />
          <stop offset=".65" stopColor="#808080" />
          <stop offset="1" stopColor="#b4b4b4" />
        </linearGradient>
        <filter id="soft" x="-20%" y="-30%" width="140%" height="160%">
          <feGaussianBlur stdDeviation="9" />
        </filter>
        <clipPath id="raster">
          <rect x="277" y="294" width="335" height="170" />
        </clipPath>
      </defs>
      <rect x="277" y="294" width="335" height="170" fill="#000" />
      <g clipPath="url(#raster)">
        <g transform="translate(265 280) scale(.33333)">
          <polygon
            points="95,115 130,80 250,95 400,92 500,80 570,92 640,135 740,180 820,150 880,118 930,115 980,150 988,200 960,232 900,255 860,290 845,340 780,380 600,380 400,400 200,390 130,330 92,240"
            fill="#2e2e2e"
            filter="url(#soft)"
          />
          <polygon
            points={usa.map((p) => p.join(",")).join(" ")}
            fill="#6c6c6c"
            stroke="url(#warm)"
            strokeWidth="66"
            strokeLinejoin="round"
            filter="url(#soft)"
          />
          <ellipse cx="420" cy="185" rx="66" ry="34" fill="#1c1c1c" filter="url(#soft)" />
          <ellipse cx="325" cy="190" rx="30" ry="26" fill="#1c1c1c" filter="url(#soft)" />
          <ellipse cx="735" cy="205" rx="22" ry="16" fill="#888" filter="url(#soft)" />
          <ellipse cx="420" cy="412" rx="26" ry="18" fill="#eee" filter="url(#soft)" />
        </g>
      </g>
      <g transform="translate(265 280) scale(.33333)" fill="#ff9e17" stroke="#3a2f1c" strokeWidth="3">
        {points.map(([x, y], i) => (
          <circle key={i} cx={x.toFixed(0)} cy={y.toFixed(0)} r="10.500" />
        ))}
        <circle cx="17" cy="42" r="11" />
        <circle cx="936" cy="572" r="12" />
        <circle cx="965" cy="577" r="12" />
        <circle cx="970" cy="571" r="11" />
        <circle cx="941" cy="573" r="11" />
        <circle cx="961" cy="573" r="11" />
        <circle cx="618" cy="220" r="16" fill="#f00" stroke="#f00" />
      </g>
    </svg>
  </main>
);

/* ---------- identify results ---------- */

const results: { label: string; value?: string; pad: string; twisty?: "open" | "closed"; marked?: boolean }[] = [
  { label: "Sampled Points", pad: "pl-[2px]", twisty: "open" },
  { label: "Title", value: "53200", pad: "pl-[22px]", twisty: "open" },
  { label: "(Derived)", pad: "pl-[42px]", twisty: "closed" },
  { label: "(Actions)", pad: "pl-[42px]", twisty: "closed" },
  { label: "GEOID", value: "53200", pad: "pl-[42px]" },
  { label: "NAME", value: "Madison, WI Urbanized A...", pad: "pl-[42px]" },
  { label: "UATYPE", value: "U", pad: "pl-[42px]" },
  { label: "ALAND", value: "391132152", pad: "pl-[42px]" },
  { label: "AWATER", value: "17790919", pad: "pl-[42px]" },
  { label: "ALAND_SQMI", value: "151.017", pad: "pl-[42px]" },
  { label: "AWATER_SQMI", value: "6.869", pad: "pl-[42px]" },
  { label: "INTPTLAT", value: "43.087355", pad: "pl-[42px]" },
  { label: "INTPTLONG", value: "-89.429873", pad: "pl-[42px]" },
  { label: "tmax_1", value: "10.60837173461914", pad: "pl-[42px]", marked: true },
  { label: "Title", value: "65809", pad: "pl-[22px]", twisty: "closed" },
];

const Divider = () => <div className="ml-[2px] mr-[3px] h-4 w-px bg-[#c4c4c4]" />;

const Identify = () => (
  <section className="flex w-[358px] shrink-0 flex-col">
    <DockTitle title="Identify Results" />
    <div className="flex h-[27px] shrink-0 items-center pl-[1px]">
      <MiniTool name="form" />
      <Divider />
      <MiniTool name="expand" />
      <MiniTool name="collapse" />
      <MiniTool name="expandNew" />
      <Divider />
      <MiniTool name="deselect" />
      <Divider />
      <MiniTool name="copy" />
      <MiniTool name="print" />
      <MiniTool name="identifyBox" />
      <MenuCaret />
    </div>
    <div className="relative min-h-0 grow border border-[#828790] bg-white">
      <table className="w-full table-fixed border-collapse text-left">
        <thead>
          <tr className="h-[22px] border-b border-[#d5d5d5] bg-gradient-to-b from-white from-50% to-[#f3f4f5] to-50%">
            <th className="w-[204px] border-r border-[#dedfe1] pl-1 font-normal">Feature</th>
            <th className="pl-1 font-normal">Value</th>
          </tr>
        </thead>
        <tbody>
          {results.map((row, i) => (
            <tr key={i} className="h-[17px] leading-[17px] even:bg-[#f5f5f5]">
              <td className="p-0">
                <div className={`relative flex ${row.pad}`}>
                  <Twisty state={row.twisty} />
                  <span className="pl-px">{row.label}</span>
                  {row.marked && (
                    <div className="pointer-events-none absolute -top-[4px] left-[53px] h-[22px] w-[268px] border-2 border-[#e01b22]" />
                  )}
                </div>
              </td>
              <td className="whitespace-nowrap p-0 pl-[2px]">{row.value}</td>
            </tr>
          ))}
        </tbody>
      </table>
      <svg width="13" height="20" viewBox="0 0 13 20" className="absolute left-[88px] top-[318px]" aria-hidden="true">
        <path d="M1 1v15.500l3.500-3.300 2.400 5.600 2.400-1-2.400-5.500H12z" fill="#fff" stroke="#222" />
      </svg>
    </div>
    <div className="flex h-[31px] shrink-0 items-center px-1 pr-[10px] text-[11px]">
      <label htmlFor="mode" className="w-[33px]">Mode</label>
      <div className="relative flex grow items-center">
        <select
          id="mode"
          className="h-5 w-[136px] appearance-none rounded-sm border border-[#707070] bg-gradient-to-b from-[#f2f2f2] to-[#d2d2d2] pl-[2px]"
        >
          <option>Current layer</option>
        </select>
        <Caret className="pointer-events-none absolute left-[124px] text-black" />
      </div>
      <label className="flex items-center gap-1">
        <CheckBox label="Auto open form" checked={false} />
        Auto open form
      </label>
    </div>
    <div className="flex h-8 shrink-0 items-center px-1 pb-[6px] text-[11px]">
      <label htmlFor="view" className="w-[29px] text-[#8a8a8a]">View</label>
      <div className="relative flex grow items-center">
        <select
          id="view"
          disabled
          className="h-5 w-[69px] appearance-none rounded-sm border border-[#b2b2b2] bg-[#f2f2f2] pl-[2px] text-[#8a8a8a]"
        >
          <option>Tree</option>
        </select>
        <Caret className="pointer-events-none absolute left-[57px] text-[#999]" />
      </div>
      <button className="mr-[2px] h-[17px] w-8 rounded-sm border border-[#707070] bg-gradient-to-b from-[#f2f2f2] to-[#d2d2d2] leading-[14px]">
        Help
      </button>
    </div>
  </section>
);

/* ---------- status bar ---------- */

const ClipLabel = ({ text, width, id }: { text: string; width: string; id: string }) => (
  <label htmlFor={id} className={`flex shrink-0 justify-center overflow-hidden whitespace-nowrap ${width}`}>
    {text}
  </label>
);

const Spin = () => (
  <div className="absolute right-px flex flex-col text-[#4a62b5]">
    <button aria-label="up" className="flex h-2 w-[14px] items-center justify-center border border-[#b5b9c0] bg-[#f0f0f0]">
      <svg width="5" height="3" viewBox="0 0 5 3" aria-hidden="true">
        <path d="M0 3h5L2.500 0z" fill="currentColor" />
      </svg>
    </button>
    <button aria-label="down" className="flex h-2 w-[14px] items-center justify-center border border-[#b5b9c0] bg-[#f0f0f0]">
      <svg width="5" height="3" viewBox="0 0 5 3" aria-hidden="true">
        <path d="M0 0h5L2.500 3z" fill="currentColor" />
      </svg>
    </button>
  </div>
);

const field = "h-5 border border-[#e0e3e8] border-t-[#abadb3] bg-white";

const StatusBar = () => (
  <footer className="flex h-[27px] shrink-0 items-center pl-1 pt-px text-[11px]">
    <div className="relative flex items-center">
      <Icon name="search" size={13} className="absolute left-[9px]" />
      <input aria-label="Locate" placeholder="Type to locate (Ctrl+K)" className={`w-[200px] pl-[27px] placeholder:text-[#808080] ${field}`} />
    </div>
    <span className="ml-[7px] w-[23px] shrink-0 overflow-hidden whitespace-nowrap">No fe</span>
    <span className="w-[7px] shrink-0" />
    <ClipLabel id="coord" text="Coordinate" width="w-[48px]" />
    <input id="coord" defaultValue="-93.2,90.9" className={`ml-px w-[67px] pl-[6px] ${field}`} />
    <Icon name="mouse" size={17} className="ml-1" />
    <span className="w-[11px]" />
    <span className="flex w-[19px] shrink-0 justify-end overflow-hidden">
      <label htmlFor="scale">cale</label>
    </span>
    <div className="relative ml-[2px] flex items-center">
      <select id="scale" className={`w-[77px] appearance-none pl-[3px] ${field}`}>
        <option>:51607400</option>
      </select>
      <Caret className="pointer-events-none absolute right-[5px] text-black" />
    </div>
    <Icon name="lock" size={15} className="ml-[9px] mr-[6px]" />
    <ClipLabel id="magnifier" text="Magnifier" width="w-[38px]" />
    <div className="relative ml-px flex items-center">
      <input id="magnifier" defaultValue="100%" className={`w-[81px] pl-[3px] ${field}`} />
      <Spin />
    </div>
    <span className="w-[9px]" />
    <ClipLabel id="rotation" text="Rotation" width="w-[34px]" />
    <div className="relative ml-2 flex items-center">
      <input id="rotation" defaultValue="0.0 °" className={`w-[79px] pl-[2px] ${field}`} />
      <Spin />
    </div>
    <label className="ml-[7px] flex items-center gap-1">
      <CheckBox label="Render" />
      Render
    </label>
    <button className="ml-4 flex items-center gap-[3px]">
      <Icon name="globe" size={15} />
      EPSG:4326
    </button>
    <button aria-label="messages" className="ml-4">
      <Icon name="message" size={17} />
    </button>
    <svg width="10" height="10" viewBox="0 0 10 10" className="ml-auto mr-[3px] self-end" aria-hidden="true">
      <path d="M7 1h2v2H7zM4 4h2v2H4zM7 4h2v2H7zM1 7h2v2H1zM4 7h2v2H4zM7 7h2v2H7z" fill="#bcbcbc" />
    </svg>
  </footer>
);

const TitleBar = () => (
  <header className="flex h-[29px] shrink-0 items-center">
    <Icon name="qgis" size={16} className="ml-px mr-[5px]" />
    <h1 className="grow">*Untitled Project - QGIS</h1>
    <div className="flex h-[19px] self-start overflow-hidden rounded-b border border-t-0 border-[#4f5d70]">
      <button aria-label="Minimize" className="flex w-[27px] items-center justify-center border-r border-[#4f5d70] bg-gradient-to-b from-[#d3dfee] from-50% to-[#a5b9d2] to-50%">
        <i className="mt-1 h-[5px] w-3 border border-[#4d5663] bg-white" />
      </button>
      <button aria-label="Maximize" className="flex w-[27px] items-center justify-center border-r border-[#4f5d70] bg-gradient-to-b from-[#d3dfee] from-50% to-[#a5b9d2] to-50%">
        <i className="flex h-[9px] w-3 items-center justify-center border border-[#4d5663] bg-white">
          <i className="h-[4px] w-[6px] border border-[#4d5663] bg-[#b5c6da]" />
        </i>
      </button>
      <button aria-label="Close" className="flex w-[46px] items-center justify-center bg-gradient-to-b from-[#e0a093] from-50% to-[#c0321c] to-50%">
        <svg width="12" height="11" viewBox="0 0 12 11" aria-hidden="true">
          <path d="M2.500 2l7 7M9.500 2l-7 7" stroke="#5b4a4a" strokeWidth="4.400" />
          <path d="M2.500 2l7 7M9.500 2l-7 7" stroke="#fff" strokeWidth="2.600" />
        </svg>
      </button>
    </div>
  </header>
);

const App = () => {
  return (
    <div className="h-screen bg-white font-['Open_Sans','Noto_Sans',sans-serif] text-[12px] leading-4 text-black">
      <div className="flex h-full flex-col rounded-lg border border-[#22303f] bg-gradient-to-r from-[#d8e8f8] via-[#b4d8fb] to-[#bcdcfa] px-[6px] pb-[6px]">
        <TitleBar />
        <div className="flex min-h-0 grow flex-col border border-[#5f6f80] bg-[#f0f0f0]">
          <nav className="flex h-5 shrink-0 items-center gap-[14px] border-b border-[#b6bccc] bg-gradient-to-b from-white via-[#f0f2f9] via-30% to-[#d9deef] pl-2 pt-px">
            {menus.map(([a, key, b]) => (
              <button key={a + key + b}>
                {a}
                <u>{key}</u>
                {b}
              </button>
            ))}
          </nav>
          <MainToolbars />
          <div className="mt-px flex min-h-0 grow gap-1">
            <div className="flex w-[256px] shrink-0 flex-col">
              <Browser />
              <Layers />
            </div>
            <MapCanvas />
            <Identify />
          </div>
          <StatusBar />
        </div>
      </div>
    </div>
  );
};

export default App;
